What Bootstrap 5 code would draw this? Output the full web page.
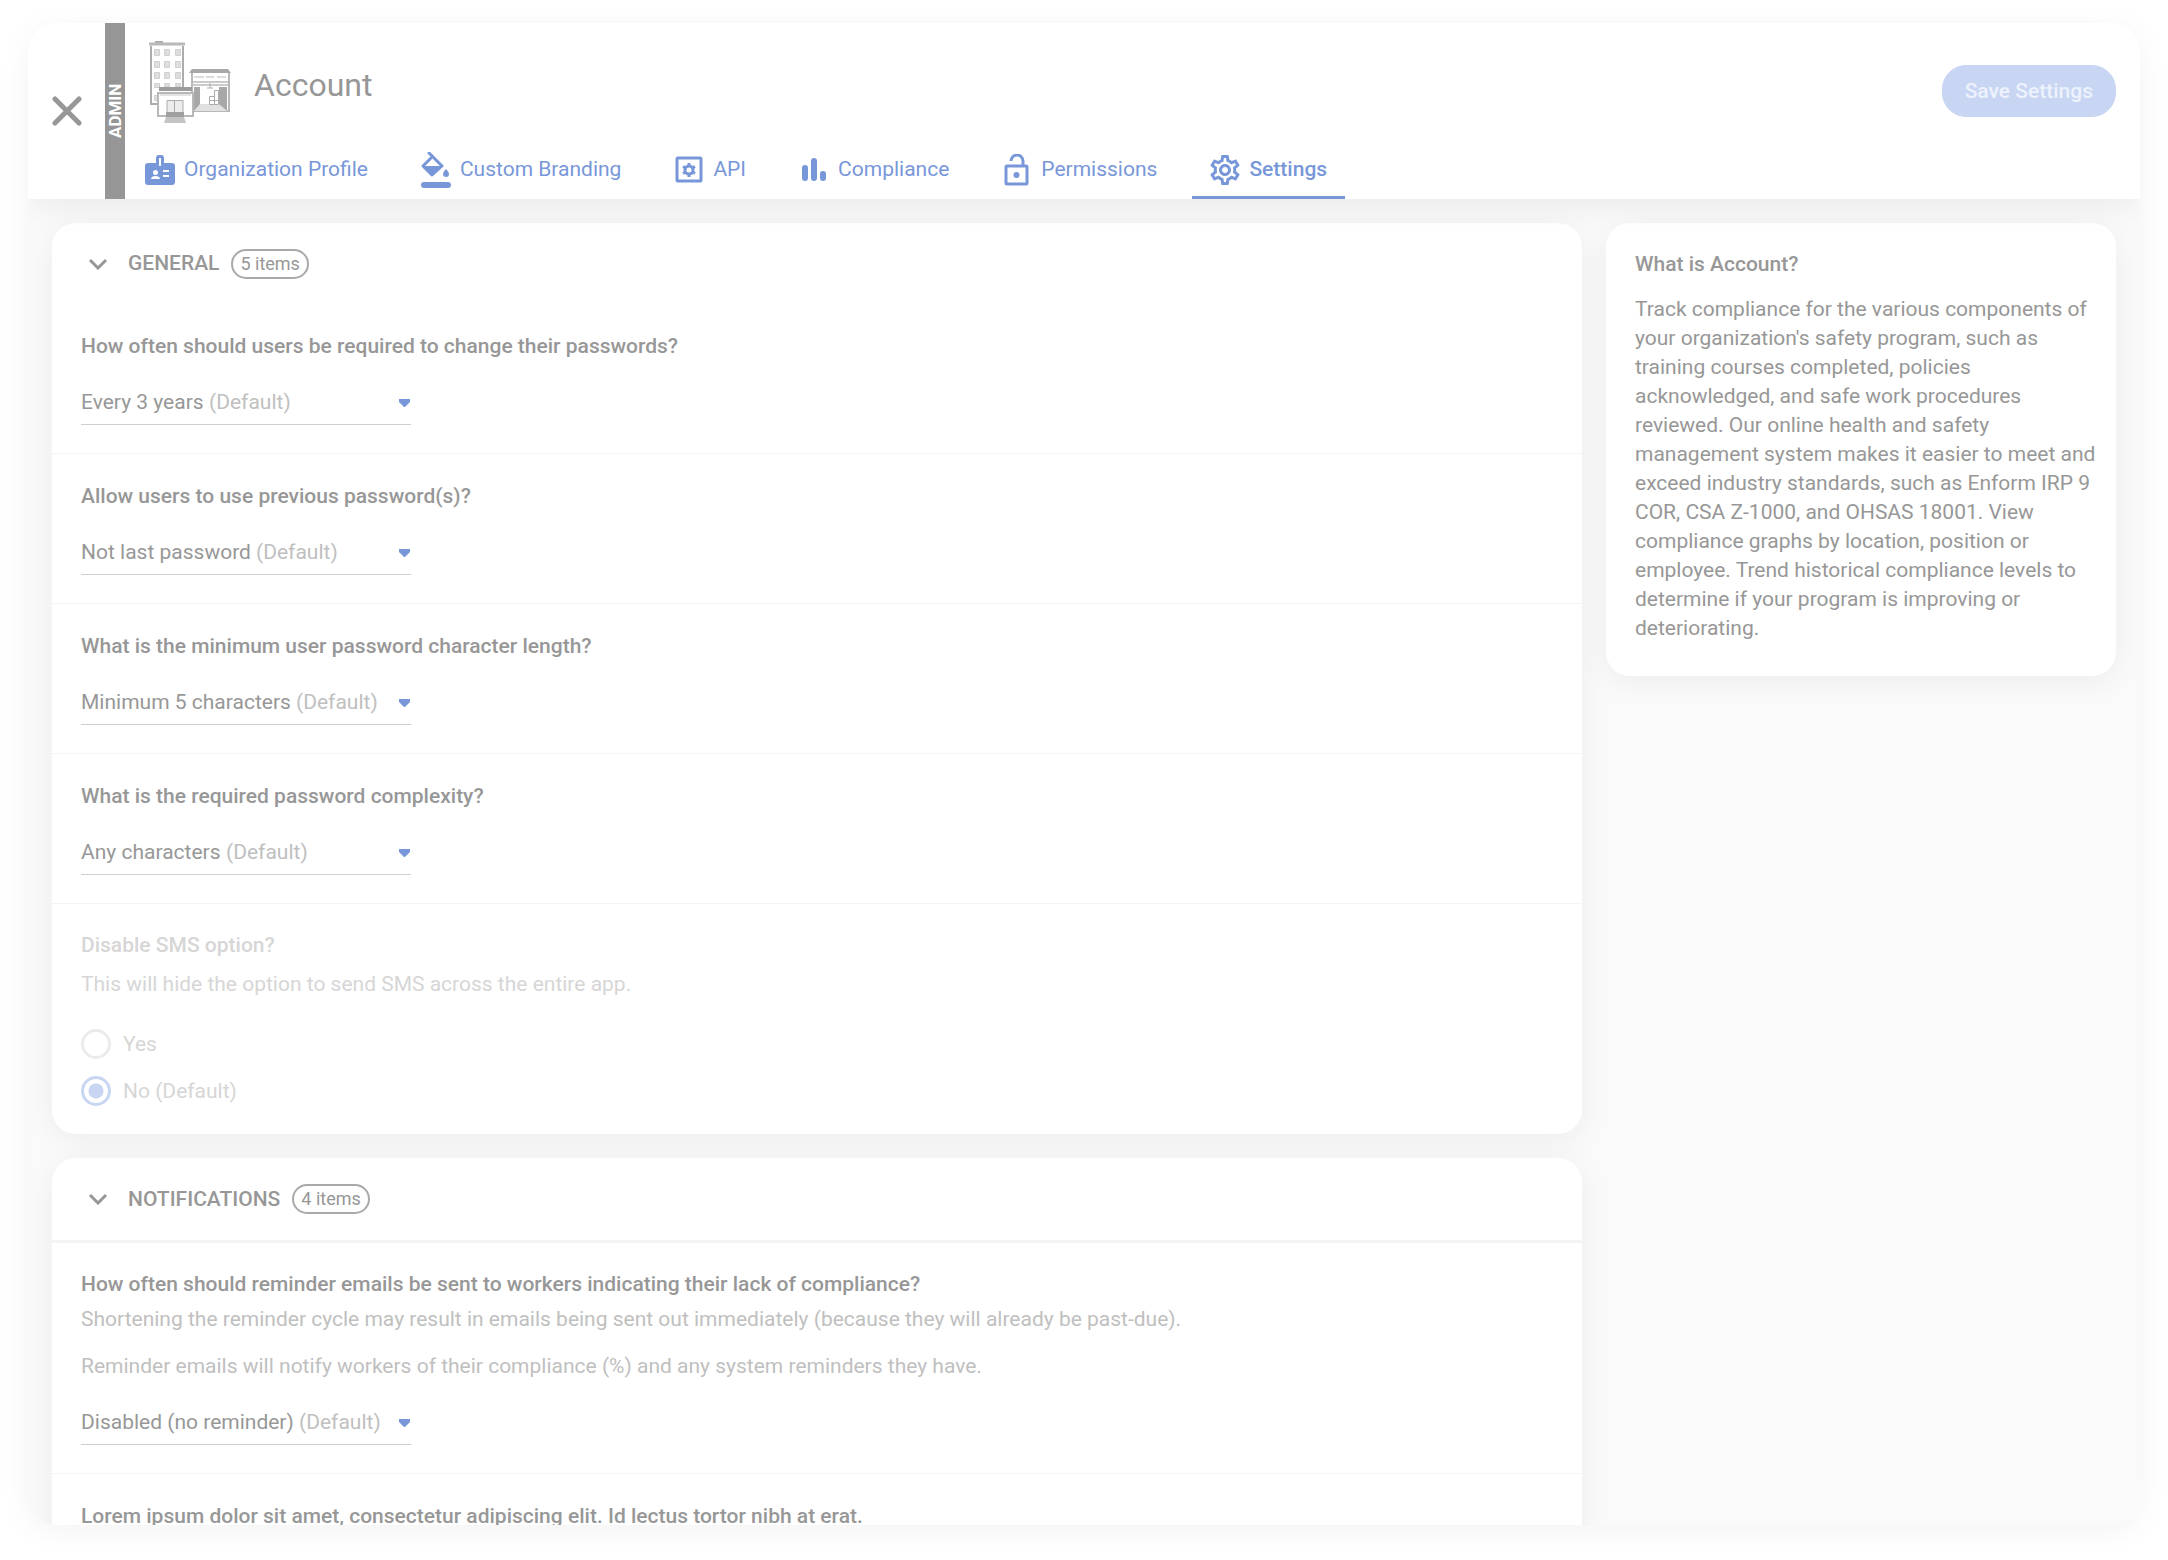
<!DOCTYPE html>
<html lang="en">
<head>
<meta charset="utf-8">
<meta name="viewport" content="width=device-width, initial-scale=1">
<title>Account settings</title>
<link href="https://cdn.jsdelivr.net/npm/bootstrap@5.3.0/dist/css/bootstrap.min.css" rel="stylesheet">
<style>
:root { --ink: #979797; --ink-soft: #c0c0c0; --ink-off: #d6d6d6; --brand: #7897d9; --brand-soft: #c8d6f3; --rule: #f4f4f4; }
body { font-family: Roboto, "Liberation Sans", sans-serif; font-size: 21px; line-height: 29px; color: var(--ink); background: #fff; padding: 23px 28px 35px; height: 100vh; overflow: hidden; }
.app-window { height: 100%; border-radius: 28px; overflow: hidden; background: #fafafa; box-shadow: 0 6px 32px rgba(0,0,0,.05); }
.app-header { height: 176px; box-shadow: 0 6px 32px rgba(0,0,0,.07); z-index: 1; }
.close-cell { width: 77px; }
.admin-strip { width: 20px; background: #969696; color: #fff; font-size: 17px; line-height: 20px; font-weight: 700; writing-mode: vertical-rl; transform: rotate(180deg); }
.app-title { font-size: 32px; line-height: 40px; font-weight: 400; }
.brand-row { padding: 18px 24px 0 23px; gap: 22px; }
.save-btn { --bs-btn-color: #edf2fc; --bs-btn-bg: var(--brand-soft); --bs-btn-border-color: var(--brand-soft); --bs-btn-hover-color: #fff; --bs-btn-hover-bg: #b9caef; --bs-btn-font-weight: 500; --bs-btn-font-size: 21px; --bs-btn-line-height: 30px; --bs-btn-padding-x: 22px; --bs-btn-padding-y: 10px; --bs-btn-border-radius: 24px; }
.tab-bar { gap: 17px; margin-left: 2px; }
.tab-bar a { gap: 9px; padding: 4px 18px 0; height: 60px; color: var(--brand); border-bottom: 3px solid transparent; }
.tab-bar a.active { border-color: var(--brand); font-weight: 500; }
.content-area { gap: 24px; padding: 24px; }
.side-panel { flex: 0 0 510px; padding: 27px 16px 33px 29px; border-radius: 24px; }
.panel-shadow { box-shadow: 0 6px 32px rgba(0,0,0,.06); }
.set-card { border-radius: 24px; }
.set-head { height: 81px; padding: 0 28px 0 36px; }
.set-head h2, .side-panel h2, .question { font-size: 21px; line-height: 29px; font-weight: 500; margin: 0; }
.count-pill { font-size: 18px; line-height: 26px; border: 2px solid #a9a9a9; border-radius: 15px; padding: 0 7px; margin-left: 12px; }
.set-row { padding: 28px 29px; border-bottom: 1px solid var(--rule); height: 150px; }
.set-row.tall { height: auto; padding-top: 27px; }
.set-head.ruled { border-bottom: 3px solid var(--rule); height: 85px; }
.picker { width: 330px; height: 38px; border-bottom: 1px solid #cfcfcf; margin-top: 26px; padding-bottom: 6px; gap: 5px; }
.picker select { appearance: none; border: 0; padding: 0; background: transparent; color: inherit; line-height: 29px; }
.soft { color: var(--ink-soft); }
.note-first { margin: 6px 0 18px; }
.off { color: var(--ink-off); }
.off .question { margin-bottom: 10px; }
.off .sms-note { margin-bottom: 30px; }
.radio-line { gap: 12px; }
.radio-line + .radio-line { margin-top: 17px; }
.radio-line .form-check-input { width: 30px; height: 30px; margin: 0; border: 3px solid #ebebeb; opacity: 1; }
.radio-line .form-check-input:checked { border-color: var(--brand-soft); background: radial-gradient(circle, var(--brand-soft) 7px, #fff 8px); }
.radio-line .form-check-input:disabled ~ .form-check-label { opacity: 1; }
</style>
<script src="https://cdn.jsdelivr.net/npm/bootstrap@5.3.0/dist/js/bootstrap.bundle.min.js"></script>
</head>
<body>
<div class="app-window d-flex flex-column">
  <header class="app-header d-flex bg-white flex-shrink-0 position-relative">
    <div class="close-cell d-flex align-items-center justify-content-center">
      <button type="button" class="btn p-0 border-0 lh-1" aria-label="Close">
        <svg width="30" height="30" viewBox="0 0 30 30" fill="none" stroke="#979797" stroke-width="5" stroke-linecap="round"><path d="M3 3l24 24M27 3L3 27"/></svg>
      </button>
    </div>
    <div class="admin-strip text-center">ADMIN</div>
    <div class="flex-grow-1 d-flex flex-column justify-content-between">
      <div class="brand-row d-flex align-items-start">
        <svg width="84" height="84" viewBox="0 0 84 84" fill="none" stroke="#acacac" aria-hidden="true">
          <path d="M7 1h8" stroke-width="2"/><path d="M1 3h36" stroke-width="3" stroke="#b8b8b8"/>
          <path d="M3 5v58h8M35 5v42" stroke-width="2"/>
          <g fill="#dedede" stroke="#d0d0d0"><path d="M6.500 8.500h5v6h-5zM16.500 8.500h5v6h-5zM27.500 8.500h5v6h-5zM6.500 20.500h5v6h-5zM16.500 20.500h5v6h-5zM27.500 20.500h5v6h-5zM6.500 31.500h5v6h-5zM16.500 31.500h5v6h-5zM27.500 31.500h5v6h-5zM6.500 42.500h5v4h-5zM16.500 42.500h5v3h-5zM27.500 42.500h5v3h-5zM6.500 54.500h3v5h-3z"/></g>
          <path d="M44 28h36l3 4H41z" fill="#a8a8a8" stroke="none"/>
          <path d="M44 32v39M81 32v39M44 70h37" stroke-width="2" stroke="#b8b8b8"/>
          <path d="M46 36h10M58 36h8M69 36h9" stroke="#dcdcdc" stroke-width="2"/>
          <path d="M45 41h35M45 44h35" stroke="#cbcbcb" stroke-width="2"/>
          <path d="M46 46h6v18l-6 6zM79 46h-8v18l8 6z" fill="#a8a8a8" stroke="none"/>
          <path d="M52 63h19l8 7H46z" fill="#e0e0e0" stroke="none"/>
          <path d="M62 42v5M59 47h6"/><path d="M61.500 55.500h5v8h-5zM66.500 49.500h4v14h-4zM61.500 59.500h9"/>
          <path d="M11 46h33v4H11z" fill="#9c9c9c" stroke="none"/><path d="M10 52h35v23H10z" fill="#fff" stroke="#b8b8b8" stroke-width="2"/>
          <path d="M12 54h31" stroke="#e2e2e2" stroke-width="2"/>
          <path d="M19 59.500h16v12H19z" fill="#ececec"/><path d="M26.500 60v12"/>
          <path d="M18 71h18v5H18z" fill="#a0a0a0" stroke="none"/><path d="M18 76h18l2 6H16z" fill="#c4c4c4" stroke="none"/>
        </svg>
        <h1 class="app-title mb-0 pt-1 flex-grow-1 align-self-center">Account</h1>
        <button type="button" class="btn save-btn mt-4">Save Settings</button>
      </div>
      <nav class="tab-bar d-flex" aria-label="Account sections">
        <a href="#" class="d-flex align-items-center text-decoration-none"><svg width="30" height="30" viewBox="0 0 30 30" fill="#7897d9"><path fill-rule="evenodd" d="M3 8h8V3a3 3 0 0 1 3-3h2a3 3 0 0 1 3 3v5h8a3 3 0 0 1 3 3v16a3 3 0 0 1-3 3H3a3 3 0 0 1-3-3V11a3 3 0 0 1 3-3zM14 3v8h2V3z"/><circle cx="10.500" cy="17.500" r="2.500" fill="#fff"/><path d="M6 24c0-2 2-3 4.500-3s4.500 1 4.500 3zM18 15h6v2h-6zM18 20h6v2h-6z" fill="#fff"/></svg>Organization Profile</a>
        <a href="#" class="d-flex align-items-center text-decoration-none"><svg width="30" height="36" viewBox="0 0 30 36" fill="#7897d9"><path d="M8 1l13 13L11 23 2 14l9-9" fill="none" stroke="#7897d9" stroke-width="3" stroke-linejoin="round" stroke-linecap="round"/><path d="M2 14h19l-10 10z"/><path d="M25 17c2 2 3 4 3 5a3 3 0 0 1-6 0c0-1 1-3 3-5z"/><rect y="30" width="30" height="6" rx="3"/></svg>Custom Branding</a>
        <a href="#" class="d-flex align-items-center text-decoration-none"><svg width="30" height="30" viewBox="0 0 30 30" fill="none" stroke="#7897d9" stroke-width="3"><rect x="3" y="3" width="24" height="23" rx="1"/><circle cx="15" cy="15" r="4"/><path d="M15 8v3M15 19v3M9 11.500l2.500 1.500M18.500 17l2.500 1.500M9 18.500l2.500-1.500M18.500 13l2.500-1.500"/></svg>API</a>
        <a href="#" class="d-flex align-items-center text-decoration-none"><svg width="30" height="30" viewBox="0 0 30 30" stroke="#7897d9" stroke-width="6" stroke-linecap="round"><path d="M6 13v10M15 6v17M24 19v4"/></svg>Compliance</a>
        <a href="#" class="d-flex align-items-center text-decoration-none"><svg width="30" height="32" viewBox="0 0 30 32" fill="none" stroke="#7897d9" stroke-width="3"><rect x="4" y="12" width="21" height="18" rx="1"/><path d="M9 7a6 6 0 0 1 12 0v5"/><circle cx="14.500" cy="21" r="3" fill="#7897d9" stroke="none"/></svg>Permissions</a>
        <a href="#" class="d-flex align-items-center text-decoration-none active" aria-current="page"><svg width="30" height="30" viewBox="2 2 20 20" fill="#7897d9"><path d="M19.430 12.980c.04-.32.07-.64.07-.98 0-.34-.03-.66-.07-.98l2.110-1.650c.19-.15.24-.42.12-.64l-2-3.460c-.09-.16-.26-.25-.44-.25-.06 0-.12.01-.17.03l-2.490 1c-.52-.4-1.080-.73-1.690-.98l-.38-2.650C14.460 2.180 14.250 2 14 2h-4c-.25 0-.46.18-.49.42l-.38 2.650c-.61.25-1.170.59-1.690.98l-2.490-1c-.06-.02-.12-.03-.18-.03-.17 0-.34.09-.43.25l-2 3.460c-.13.22-.07.49.12.64l2.110 1.650c-.04.32-.07.65-.07.98 0 .33.03.66.07.98l-2.110 1.650c-.19.15-.24.42-.12.64l2 3.460c.09.16.26.25.44.25.06 0 .12-.01.17-.03l2.490-1c.52.4 1.080.73 1.690.98l.38 2.650c.03.24.24.42.49.42h4c.25 0 .46-.18.49-.42l.38-2.650c.61-.25 1.170-.59 1.690-.98l2.490 1c.06.02.12.03.18.03.17 0 .34-.09.43-.25l2-3.460c.12-.22.07-.49-.12-.64l-2.110-1.650zm-1.980-1.710c.04.31.05.52.05.73 0 .21-.02.43-.05.73l-.14 1.130.89.7 1.080.84-.7 1.210-1.270-.51-1.040-.42-.9.68c-.43.32-.84.56-1.250.73l-1.060.43-.16 1.130-.2 1.350h-1.400l-.19-1.350-.16-1.130-1.060-.43c-.43-.18-.83-.41-1.230-.71l-.91-.7-1.060.43-1.270.51-.7-1.210 1.080-.84.89-.7-.14-1.130c-.03-.31-.05-.54-.05-.74s.02-.43.05-.73l.14-1.130-.89-.7-1.080-.84.7-1.210 1.270.51 1.040.42.9-.68c.43-.32.84-.56 1.250-.73l1.060-.43.16-1.130.2-1.350h1.390l.19 1.350.16 1.130 1.060.43c.43.18.83.41 1.230.71l.91.7 1.060-.43 1.270-.51.7 1.210-1.070.85-.89.7.14 1.130zM12 8c-2.210 0-4 1.790-4 4s1.790 4 4 4 4-1.790 4-4-1.790-4-4-4zm0 6c-1.100 0-2-.9-2-2s.9-2 2-2 2 .9 2 2-.9 2-2 2z"/></svg>Settings</a>
      </nav>
    </div>
  </header>
  <main class="content-area d-flex align-items-start">
    <div class="flex-grow-1 d-flex flex-column gap-4">
      <section class="set-card panel-shadow bg-white">
        <div class="set-head d-flex align-items-center">
          <svg class="me-3" width="20" height="12" viewBox="0 0 20 12" fill="none" stroke="#979797" stroke-width="3"><path d="M2 2l8 8 8-8"/></svg>
          <h2 class="ms-1">GENERAL</h2><span class="count-pill">5 items</span>
        </div>
        <div class="set-row">
          <label class="question d-block" for="pwChange">How often should users be required to change their passwords?</label>
          <div class="picker d-flex align-items-center"><select id="pwChange"><option>Every 3 years</option></select><span class="soft">(Default)</span><svg class="ms-auto" width="13" height="8" viewBox="0 0 13 8" fill="#7897d9"><path d="M1 0h11v3L7 8H6L1 3z"/></svg></div>
        </div>
        <div class="set-row">
          <label class="question d-block" for="pwPrev">Allow users to use previous password(s)?</label>
          <div class="picker d-flex align-items-center"><select id="pwPrev"><option>Not last password</option></select><span class="soft">(Default)</span><svg class="ms-auto" width="13" height="8" viewBox="0 0 13 8" fill="#7897d9"><path d="M1 0h11v3L7 8H6L1 3z"/></svg></div>
        </div>
        <div class="set-row">
          <label class="question d-block" for="pwLength">What is the minimum user password character length?</label>
          <div class="picker d-flex align-items-center"><select id="pwLength"><option>Minimum 5 characters</option></select><span class="soft">(Default)</span><svg class="ms-auto" width="13" height="8" viewBox="0 0 13 8" fill="#7897d9"><path d="M1 0h11v3L7 8H6L1 3z"/></svg></div>
        </div>
        <div class="set-row">
          <label class="question d-block" for="pwComplex">What is the required password complexity?</label>
          <div class="picker d-flex align-items-center"><select id="pwComplex"><option>Any characters</option></select><span class="soft">(Default)</span><svg class="ms-auto" width="13" height="8" viewBox="0 0 13 8" fill="#7897d9"><path d="M1 0h11v3L7 8H6L1 3z"/></svg></div>
        </div>
        <fieldset class="set-row tall off border-0" disabled>
          <legend class="question">Disable SMS option?</legend>
          <p class="sms-note">This will hide the option to send SMS across the entire app.</p>
          <div class="radio-line d-flex align-items-center"><input class="form-check-input" type="radio" name="sms" id="smsYes"><label class="form-check-label" for="smsYes">Yes</label></div>
          <div class="radio-line d-flex align-items-center"><input class="form-check-input" type="radio" name="sms" id="smsNo" checked><label class="form-check-label" for="smsNo">No (Default)</label></div>
        </fieldset>
      </section>
      <section class="set-card panel-shadow bg-white">
        <div class="set-head ruled d-flex align-items-center">
          <svg class="me-3" width="20" height="12" viewBox="0 0 20 12" fill="none" stroke="#979797" stroke-width="3"><path d="M2 2l8 8 8-8"/></svg>
          <h2 class="ms-1">NOTIFICATIONS</h2><span class="count-pill">4 items</span>
        </div>
        <div class="set-row tall">
          <label class="question d-block" for="remind">How often should reminder emails be sent to workers indicating their lack of compliance?</label>
          <p class="soft note-first">Shortening the reminder cycle may result in emails being sent out immediately (because they will already be past-due).</p>
          <p class="soft mb-0">Reminder emails will notify workers of their compliance (%) and any system reminders they have.</p>
          <div class="picker d-flex align-items-center"><select id="remind"><option>Disabled (no reminder)</option></select><span class="soft">(Default)</span><svg class="ms-auto" width="13" height="8" viewBox="0 0 13 8" fill="#7897d9"><path d="M1 0h11v3L7 8H6L1 3z"/></svg></div>
        </div>
        <div class="set-row">
          <p class="question">Lorem ipsum dolor sit amet, consectetur adipiscing elit. Id lectus tortor nibh at erat.</p>
        </div>
      </section>
    </div>
    <aside class="side-panel panel-shadow bg-white">
      <h2>What is Account?</h2>
      <p class="mb-0 mt-3">Track compliance for the various components of your organization's safety program, such as training courses completed, policies acknowledged, and safe work procedures reviewed. Our online health and safety management system makes it easier to meet and exceed industry standards, such as Enform IRP 9 COR, CSA Z-1000, and OHSAS 18001. View compliance graphs by location, position or employee. Trend historical compliance levels to determine if your program is improving or deteriorating.</p>
    </aside>
  </main>
</div>
</body>
</html>
